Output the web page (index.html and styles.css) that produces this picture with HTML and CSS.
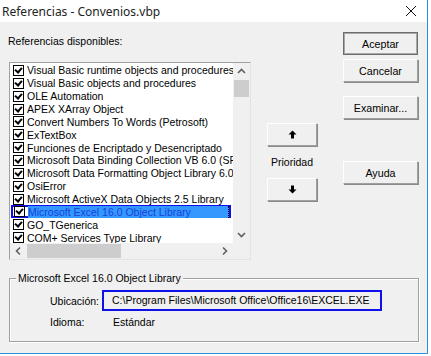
FILE: index.html
```html
<!DOCTYPE html>
<html lang="es">
<head>
    <title>Referencias - Convenios.vbp</title>
    <link rel="stylesheet" href="styles.css">
</head>
<body>
    <div class="window">
        <div class="titlebar">
            <span class="title">Referencias - Convenios.vbp</span>
            <svg class="close" width="12" height="12" viewBox="0 0 12 12">
                <path d="M1 1 L11 11 M11 1 L1 11" stroke="#111" stroke-width="1" fill="none"/>
            </svg>
        </div>
        <div class="client">
            <div class="top">
                <div class="left">
                    <div class="caption">Referencias disponibles:</div>
                    <div class="listbox">
                        <div class="items">
                            <div class="item"><span class="check"></span><span class="text">Visual Basic runtime objects and procedures</span></div>
                            <div class="item"><span class="check"></span><span class="text">Visual Basic objects and procedures</span></div>
                            <div class="item"><span class="check"></span><span class="text">OLE Automation</span></div>
                            <div class="item"><span class="check"></span><span class="text">APEX XArray Object</span></div>
                            <div class="item"><span class="check"></span><span class="text">Convert Numbers To Words (Petrosoft)</span></div>
                            <div class="item"><span class="check"></span><span class="text">ExTextBox</span></div>
                            <div class="item"><span class="check"></span><span class="text">Funciones de Encriptado y Desencriptado</span></div>
                            <div class="item"><span class="check"></span><span class="text">Microsoft Data Binding Collection VB 6.0 (SP4)</span></div>
                            <div class="item"><span class="check"></span><span class="text">Microsoft Data Formatting Object Library 6.0 (SP4)</span></div>
                            <div class="item"><span class="check"></span><span class="text">OsiError</span></div>
                            <div class="item"><span class="check"></span><span class="text">Microsoft ActiveX Data Objects 2.5 Library</span></div>
                            <div class="item selected"><span class="check"></span><span class="text">Microsoft Excel 16.0 Object Library</span></div>
                            <div class="item"><span class="check"></span><span class="text">GO_TGenerica</span></div>
                            <div class="item"><span class="check"></span><span class="text">COM+ Services Type Library</span></div>
                        </div>
                        <div class="vscroll">
                            <svg class="arrow" width="17" height="17" viewBox="0 0 17 17"><path d="M5 10 L8.5 6.5 L12 10" stroke="#606060" stroke-width="1.6" fill="none"/></svg>
                            <div class="vthumb"></div>
                            <svg class="arrow down" width="17" height="17" viewBox="0 0 17 17"><path d="M5 7 L8.5 10.5 L12 7" stroke="#606060" stroke-width="1.6" fill="none"/></svg>
                        </div>
                        <div class="hscroll">
                            <svg class="arrow" width="17" height="16" viewBox="0 0 17 16"><path d="M10 4.5 L6.5 8 L10 11.5" stroke="#606060" stroke-width="1.6" fill="none"/></svg>
                            <div class="hthumb"></div>
                            <svg class="arrow right" width="17" height="16" viewBox="0 0 17 16"><path d="M7 4.5 L10.5 8 L7 11.5" stroke="#606060" stroke-width="1.6" fill="none"/></svg>
                        </div>
                        <div class="corner"></div>
                    </div>
                </div>
                <div class="middle">
                    <button class="btn small">
                        <svg width="9" height="9" viewBox="0 0 9 9"><path d="M4.5 0.5 L8.5 4.5 L6 4.5 L6 8.5 L3 8.5 L3 4.5 L0.5 4.5 Z" fill="#000"/></svg>
                    </button>
                    <div class="priority">Prioridad</div>
                    <button class="btn small">
                        <svg width="9" height="9" viewBox="0 0 9 9"><path d="M4.5 8.5 L8.5 4.5 L6 4.5 L6 0.5 L3 0.5 L3 4.5 L0.5 4.5 Z" fill="#000"/></svg>
                    </button>
                </div>
                <div class="right">
                    <button class="btn default">Aceptar</button>
                    <button class="btn">Cancelar</button>
                    <button class="btn gap">Examinar...</button>
                    <button class="btn gap2">Ayuda</button>
                </div>
            </div>
            <div class="group">
                <div class="legend">Microsoft Excel 16.0 Object Library</div>
                <div class="row first">
                    <span class="label">Ubicación:</span>
                    <span class="path">C:\Program Files\Microsoft Office\Office16\EXCEL.EXE</span>
                </div>
                <div class="row">
                    <span class="label">Idioma:</span>
                    <span class="value">Estándar</span>
                </div>
            </div>
        </div>
    </div>
</body>
</html>
```

FILE: styles.css
```css
body {
    margin: 0;
    padding: 0;
    background-color: white;
    font-family: "Liberation Sans", Arial, sans-serif;
    font-size: 10.5px;
    color: #000;
}
.window {
    width: 427px;
    height: 353px;
    border-right: 1px solid #2b8fe0;
    border-bottom: 1px solid #2b8fe0;
    background-color: #f0f0f0;
}
.titlebar {
    height: 22px;
    background-color: white;
    display: flex;
    align-items: center;
    justify-content: space-between;
}
.title {
    font-family: "Noto Sans", sans-serif;
    font-size: 12px;
    color: #222;
    padding-left: 2px;
}
.close {
    margin-right: 10px;
}
.client {
    padding: 10px 0 0 9px;
}
.top {
    display: flex;
}
.left {
    width: 242px;
}
.caption {
    margin-top: 3px;
    margin-left: -1px;
    height: 13px;
    line-height: 13px;
}
.listbox {
    margin-top: 14px;
    width: 240px;
    height: 196px;
    border: 1px solid #a0a0a0;
    border-right-color: #e3e3e3;
    border-bottom-color: #e3e3e3;
    display: grid;
    grid-template-columns: 223px 17px;
    grid-template-rows: 180px 16px;
}
.items {
    background-color: white;
    overflow: hidden;
    padding-top: 1px;
}
.item {
    display: flex;
    align-items: center;
    height: 12.87px;
    white-space: nowrap;
    padding-left: 3px;
    box-sizing: border-box;
}
.check {
    flex: none;
    width: 9px;
    height: 9px;
    border: 1px solid #000;
    background-color: white;
    margin-right: 3px;
    position: relative;
}
.check::after {
    content: "";
    position: absolute;
    left: 2px;
    top: 0px;
    width: 3px;
    height: 5px;
    border: solid #000;
    border-width: 0 2px 2px 0;
    transform: rotate(40deg);
}
.text {
    line-height: 12px;
}
.selected {
    margin-left: 1px;
    width: 220px;
    border: 2px solid #0f0fe6;
    padding-left: 0;
    background-color: white;
}
.selected .check {
    margin-left: 1px;
}
.selected .text {
    flex: 1;
    background-color: #3399ff;
    color: #1b3fd8;
    border-right: 1px dotted #000;
}
.vscroll {
    background-color: #f0f0f0;
    display: flex;
    flex-direction: column;
}
.vthumb {
    margin: 0 1px 0 1px;
    height: 17px;
    background-color: #cdcdcd;
}
.vscroll .down {
    margin-top: auto;
}
.hscroll {
    background-color: #f0f0f0;
    display: flex;
}
.hthumb {
    margin: 1px 0;
    width: 94px;
    background-color: #cdcdcd;
}
.hscroll .right {
    margin-left: auto;
}
.corner {
    background-color: #f0f0f0;
}
.middle {
    width: 92px;
    padding-top: 91px;
    display: flex;
    flex-direction: column;
    align-items: flex-start;
    padding-left: 16px;
    box-sizing: border-box;
}
.priority {
    width: 50px;
    text-align: center;
    height: 32px;
    line-height: 32px;
}
.btn {
    font-family: "Liberation Sans", Arial, sans-serif;
    font-size: 10.7px;
    color: #000;
    width: 75px;
    height: 23px;
    padding: 0;
    background-color: #f0f0f0;
    border: 1px solid;
    border-color: #ffffff #a0a0a0 #a0a0a0 #ffffff;
    box-shadow: 1px 1px 0 #8a8a8a;
    display: flex;
    align-items: center;
    justify-content: center;
    margin-bottom: 4px;
}
.btn.small {
    width: 50px;
    margin-bottom: 0;
}
.btn.default {
    border: 1px solid #6d6d6d;
    box-shadow: inset 0 0 0 1px #a8a8a8;
    margin-bottom: 4px;
}
.right {
    display: flex;
    flex-direction: column;
}
.btn.gap {
    margin-top: 10px;
}
.btn.gap2 {
    margin-top: 38px;
}
.group {
    margin-top: 18px;
    width: 408px;
    height: 62px;
    border: 1px solid #a0a0a0;
    box-shadow: inset 1px 1px 0 #fff, 1px 1px 0 #fff;
    position: relative;
}
.legend {
    position: absolute;
    top: -7px;
    left: 6px;
    padding: 0 2px;
    background-color: #f0f0f0;
    line-height: 13px;
}
.row {
    display: flex;
    align-items: center;
    margin-left: 40px;
}
.row.first {
    margin-top: 11px;
}
.label {
    width: 52px;
}
.path {
    border: 2px solid #1010e8;
    height: 17px;
    width: 268px;
    line-height: 17px;
    padding-left: 8px;
    white-space: nowrap;
}
.value {
    margin-left: 11px;
    height: 22px;
    line-height: 22px;
}
```
